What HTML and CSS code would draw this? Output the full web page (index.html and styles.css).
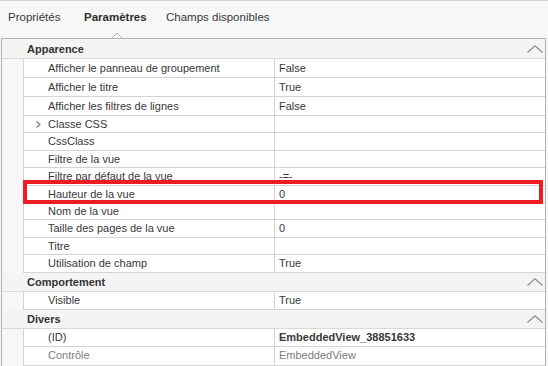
FILE: index.html
```html
<!DOCTYPE html>
<html>
<head>
    <title>Paramètres</title>
    <meta charset="utf-8">
    <link rel="stylesheet" href="styles.css">
</head>
<body>
    <div class="tabs">
        <span class="tab">Propriétés</span>
        <span class="tab active">Paramètres</span>
        <span class="tab">Champs disponibles</span>
        <svg class="notch" width="14" height="8" viewBox="0 0 14 8"><polyline points="0.5,7.5 7,1 13.5,7.5" fill="#f7f7f7" stroke="#b4b4b4" stroke-width="1"/></svg>
    </div>

    <div class="panel">
        <div class="cat">
            <span>Apparence</span>
            <svg class="caret" width="16" height="8" viewBox="0 0 16 8"><polyline points="0.5,7.5 8,0.8 15.5,7.5" fill="none" stroke="#8c8c8c" stroke-width="1.2"/></svg>
        </div>
        <div class="row tall"><div class="name">Afficher le panneau de groupement</div><div class="val">False</div></div>
        <div class="row tall"><div class="name">Afficher le titre</div><div class="val">True</div></div>
        <div class="row tall"><div class="name">Afficher les filtres de lignes</div><div class="val">False</div></div>
        <div class="row short"><div class="name"><svg class="expand" width="5" height="7" viewBox="0 0 5 7"><polyline points="0.5,0.5 4,3.5 0.5,6.5" fill="none" stroke="#777" stroke-width="1.1"/></svg>Classe CSS</div><div class="val"></div></div>
        <div class="row short"><div class="name">CssClass</div><div class="val"></div></div>
        <div class="row short"><div class="name">Filtre de la vue</div><div class="val"></div></div>
        <div class="row short"><div class="name">Filtre par défaut de la vue</div><div class="val">-=-</div></div>
        <div class="row short"><div class="name">Hauteur de la vue</div><div class="val">0</div></div>
        <div class="row short"><div class="name">Nom de la vue</div><div class="val"></div></div>
        <div class="row short"><div class="name">Taille des pages de la vue</div><div class="val">0</div></div>
        <div class="row short"><div class="name">Titre</div><div class="val"></div></div>
        <div class="row short"><div class="name">Utilisation de champ</div><div class="val">True</div></div>

        <div class="cat">
            <span>Comportement</span>
            <svg class="caret" width="16" height="8" viewBox="0 0 16 8"><polyline points="0.5,7.5 8,0.8 15.5,7.5" fill="none" stroke="#8c8c8c" stroke-width="1.2"/></svg>
        </div>
        <div class="row"><div class="name">Visible</div><div class="val">True</div></div>

        <div class="cat">
            <span>Divers</span>
            <svg class="caret" width="16" height="8" viewBox="0 0 16 8"><polyline points="0.5,7.5 8,0.8 15.5,7.5" fill="none" stroke="#8c8c8c" stroke-width="1.2"/></svg>
        </div>
        <div class="row"><div class="name">(ID)</div><div class="val bold">EmbeddedView_38851633</div></div>
        <div class="row readonly"><div class="name">Contrôle</div><div class="val">EmbeddedView</div></div>
        <div class="row"><div class="name"></div><div class="val"></div></div>

        <div class="mark"></div>
    </div>
</body>
</html>
```

FILE: styles.css
```css
body{margin:0;background:#f7f7f7;font-family:"Liberation Sans", Arial, sans-serif;font-size:11px;color:#383838;overflow:hidden;}

.tabs{position:relative;display:grid;grid-template-columns:76px 82px auto;justify-content:start;padding-left:8px;height:37px;line-height:32px;border-top:1px solid #d6d6d6;}
.tab{white-space:nowrap;font-size:11.5px;}
.tab.active{font-weight:bold;color:#2e2e2e;}
.notch{position:absolute;left:110px;top:31px;}

.panel{position:relative;margin-left:1px;width:545px;box-sizing:border-box;border-left:1px solid #b0b0b0;border-right:1px solid #b0b0b0;border-top:1px solid #b4b4b4;}

.cat{display:flex;align-items:center;justify-content:space-between;height:19.3px;box-sizing:border-box;border-bottom:1px solid #d8d8d8;padding:0 2px 0 25px;background:#f4f4f4;font-weight:bold;color:#333;}
.cat:first-child{height:20px;}
.caret{display:block;}

.row{display:grid;grid-template-columns:251px 1fr;margin-left:21px;height:18.2px;box-sizing:border-box;line-height:17px;background:#fff;border-left:1px solid #d4d4d4;border-bottom:1px solid #d4d4d4;}
.row.tall{height:19px;line-height:18px;}
.row.short{height:17.4px;line-height:16.4px;}
.name{position:relative;padding-left:24px;border-right:1px solid #d4d4d4;white-space:nowrap;}
.val{padding-left:4px;white-space:nowrap;}
.val.bold{font-weight:bold;}
.readonly{color:#7c7c7c;}
.expand{position:absolute;left:12px;top:5px;}

.mark{position:absolute;left:21px;top:141px;width:520px;height:24px;box-sizing:border-box;border:4px solid #ed1c24;}
```
